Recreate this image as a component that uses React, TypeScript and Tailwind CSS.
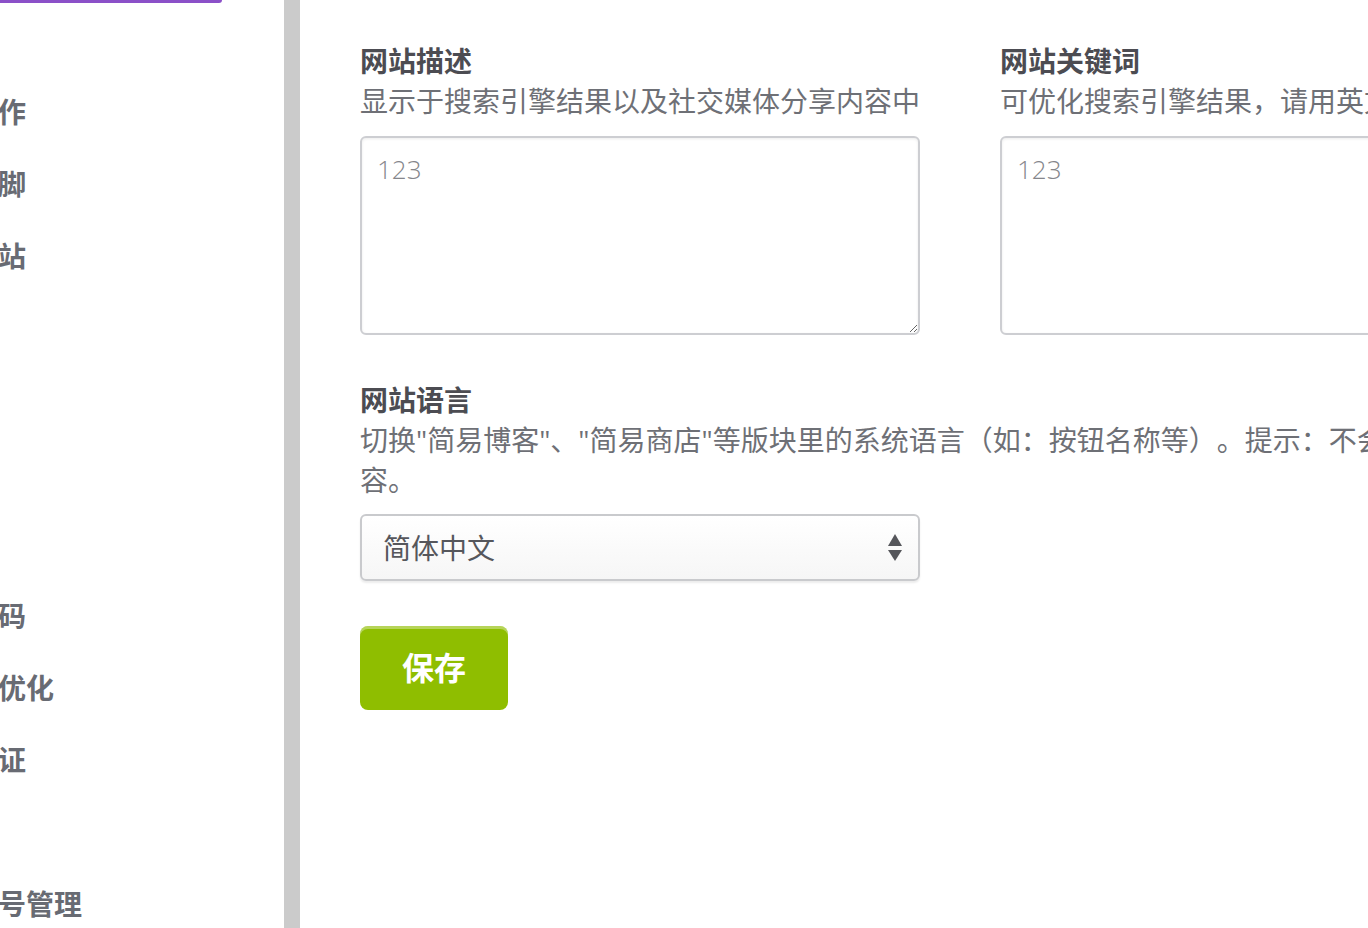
import { useState } from 'react';

const sideItems = ['作', '脚', '站', '', '', '', '', '码', '优化', '证', '', '号管理'];

function SideNav() {
  return (
    <aside className="w-[284px] flex-shrink-0 overflow-hidden bg-white">
      <div className="w-[222px] h-[3px] bg-[#8b50c8] rounded-br-[3px]" />
      <ul className="pt-[73px]">
        {sideItems.map((item, i) => (
          <li
            key={i}
            className="h-[72px] flex items-center -ml-[2px] text-[28px] font-bold text-[#686b73] whitespace-nowrap"
          >
            {item || '\u00a0'}
          </li>
        ))}
      </ul>
    </aside>
  );
}

function Field({ label, hint, value }: { label: string; hint: string; value: string }) {
  const [text, setText] = useState(value);
  return (
    <div className="w-[560px] flex-shrink-0">
      <h3 className="text-[28px] leading-[40px] font-bold text-[#4c4c52]">{label}</h3>
      <p className="text-[28px] leading-[40px] text-[#6e7076] whitespace-nowrap">{hint}</p>
      <textarea
        value={text}
        onChange={(e) => setText(e.target.value)}
        className="mt-[15px] block w-[560px] h-[199px] rounded-[6px] border-2 border-[#cdced2] bg-white px-[15px] pt-[12px] text-[26px] font-light text-[#85868b] shadow-[inset_0_1px_3px_rgba(0,0,0,0.08)] outline-none"
      />
    </div>
  );
}

export default function App() {
  return (
    <div className="flex h-[928px] w-[1368px] overflow-hidden bg-white font-['Open_Sans','Noto_Sans_CJK_SC',sans-serif] [text-spacing-trim:space-all]">
      <SideNav />
      <div className="w-[16px] flex-shrink-0 bg-[#cbcbcb]" />

      <main className="flex-1 min-w-0 overflow-hidden pl-[60px] pt-[41px]">
        <div className="flex gap-[80px] w-[1200px]">
          <Field label="网站描述" hint="显示于搜索引擎结果以及社交媒体分享内容中" value="123" />
          <Field label="网站关键词" hint="可优化搜索引擎结果，请用英文逗号分隔关键词" value="123" />
        </div>

        <section className="mt-[45px] w-[1200px]">
          <h3 className="text-[28px] leading-[40px] font-bold text-[#4c4c52]">网站语言</h3>
          <p className="text-[28px] leading-[40px] text-[#6e7076] whitespace-nowrap">
            切换"简易博客"、"简易商店"等版块里的系统语言（如：按钮名称等）。提示：不会改变网站的内
            <br />
            容。
          </p>

          <div className="mt-[14px] w-[560px] h-[67px] rounded-[6px] border-2 border-[#c9cacd] bg-gradient-to-b from-white to-[#f6f6f6] shadow-[0_2px_2px_rgba(0,0,0,0.08)] flex items-center justify-between pl-[21px] pr-[15px]">
            <span className="text-[28px] text-[#56575c]">简体中文</span>
            <svg width="16" height="30" viewBox="0 0 16 30" className="text-[#55565b]">
              <path d="M8 1 L15 13 L1 13 Z" fill="currentColor" />
              <path d="M1 17 L15 17 L8 28 Z" fill="currentColor" />
            </svg>
          </div>

          <button className="mt-[45px] w-[148px] h-[84px] rounded-[8px] bg-[#8fbe00] shadow-[inset_0_3px_0_rgba(255,255,255,0.35)] text-[32px] font-bold text-white">
            保存
          </button>
        </section>
      </main>
    </div>
  );
}
